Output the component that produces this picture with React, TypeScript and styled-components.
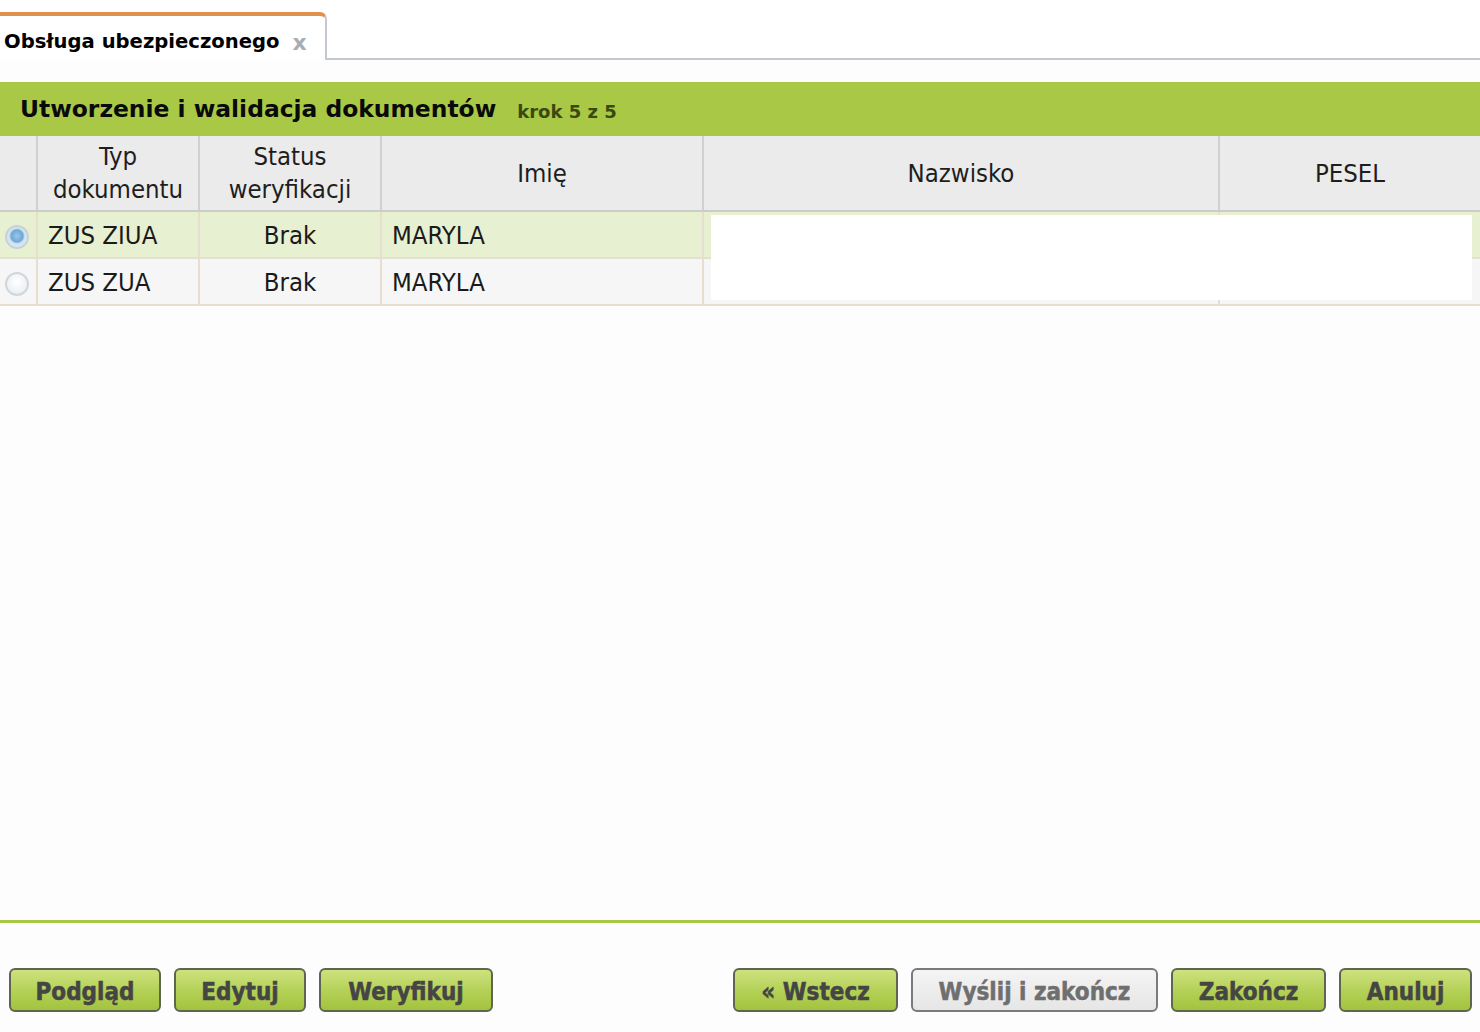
import * as React from 'react';
import styled, { createGlobalStyle } from 'styled-components';

const GlobalStyle = createGlobalStyle`
    html, body {
        margin: 0;
        padding: 0;
        background: #fdfdfd;
    }
    #root {
        height: 1032px;
    }
`;

const Page = styled.div`
    height: 1032px;
    display: flex;
    flex-direction: column;
    font-family: 'DejaVu Sans Condensed', 'DejaVu Sans', sans-serif;
    color: #1a1a1a;
    background: #fdfdfd;
`;

const TabBar = styled.div`
    display: flex;
    padding-top: 12px;
    background: #fff;
`;

const Tab = styled.div`
    width: 327px;
    height: 48px;
    box-sizing: border-box;
    border-top: 4px solid #e0914d;
    border-right: 2px solid #c4c8d0;
    border-top-right-radius: 7px;
    background: #fff;
    display: flex;
    align-items: center;
    padding: 6px 0 0 4px;
    gap: 13px;
`;

const TabTitle = styled.span`
    font-family: 'DejaVu Sans', sans-serif;
    font-weight: bold;
    font-size: 19.6px;
    color: #000;
`;

const TabClose = styled.span`
    font-family: 'DejaVu Sans', sans-serif;
    font-weight: bold;
    font-size: 22px;
    color: #a9aeb4;
    margin-top: 2px;
`;

const TabRest = styled.div`
    flex: 1;
    border-bottom: 2px solid #c4c8d0;
`;

const Spacer = styled.div`
    height: 22px;
    background: #fdfdfd;
`;

const PanelHeader = styled.div`
    height: 54px;
    background: #a8c846;
    display: flex;
    align-items: center;
    padding-left: 20px;
    gap: 21px;
`;

const PanelTitle = styled.span`
    font-family: 'DejaVu Sans', sans-serif;
    font-weight: bold;
    font-size: 23.4px;
    color: #0a0a0a;
`;

const Step = styled.span`
    font-family: 'DejaVu Sans', sans-serif;
    font-weight: bold;
    font-size: 18px;
    color: #3a4812;
    margin-top: 4px;
`;

const TableWrap = styled.div`
    position: relative;
`;

const Grid = styled.table`
    width: 100%;
    border-collapse: collapse;
    table-layout: fixed;
    font-size: 25.5px;
`;

const HeadCell = styled.th`
    height: 74px;
    background: #ebebeb;
    border-left: 2px solid #d0d0d0;
    border-bottom: 2px solid #cccccc;
    font-weight: normal;
    line-height: 33px;
    color: #1e1e1e;
    text-align: center;
    padding: 0 4px;
    &:first-child {
        border-left: none;
    }
`;

const Row = styled.tr<{ $selected?: boolean }>`
    background: ${p => (p.$selected ? '#e7f0d1' : '#f6f6f6')};
    border-bottom: 2px solid #e6dfcd;
`;

const Cell = styled.td<{ $align?: string }>`
    height: 45px;
    padding: 0 10px;
    border-left: 2px solid #e6dfcd;
    text-align: ${p => p.$align || 'left'};
    white-space: nowrap;
    overflow: hidden;
    &:first-child {
        border-left: none;
        padding: 0;
        text-align: left;
    }
`;

const Radio = styled.span<{ $checked?: boolean }>`
    display: inline-block;
    width: 24px;
    height: 24px;
    border-radius: 50%;
    box-sizing: border-box;
    vertical-align: middle;
    margin-left: 5px;
    border: 2px solid ${p => (p.$checked ? '#c6d2da' : '#d2d6da')};
    background: ${p =>
        p.$checked
            ? 'radial-gradient(circle at 50% 45%, #9cc8e8 0, #6ea8d6 40%, #cfe2ef 52%, #eef4f8 100%)'
            : 'radial-gradient(circle at 50% 40%, #ffffff 0, #eef3f6 60%, #dce4e8 100%)'};
`;

const Mask = styled.div`
    position: absolute;
    left: 711px;
    top: 79px;
    width: 761px;
    height: 85px;
    background: #ffffff;
`;

const Filler = styled.div`
    flex: 1;
    background: #fdfdfd;
`;

const Divider = styled.div`
    height: 3px;
    background: #a8c846;
`;

const Footer = styled.div`
    height: 109px;
    display: flex;
    justify-content: space-between;
    align-items: flex-start;
    padding: 45px 8px 0 9px;
    box-sizing: border-box;
    background: #fdfdfd;
`;

const ButtonGroup = styled.div`
    display: flex;
    gap: 13px;
`;

const Button = styled.button<{ $w: number; $disabled?: boolean }>`
    width: ${p => p.$w}px;
    height: 44px;
    border: 2px solid ${p => (p.$disabled ? '#7a7a7a' : '#5f6650')};
    border-radius: 6px;
    background: ${p =>
        p.$disabled
            ? 'linear-gradient(#f4f4f4, #e6e6e6)'
            : 'linear-gradient(#cde27e, #b3d055 55%, #a2c33f)'};
    font-family: 'DejaVu Sans Condensed', 'DejaVu Sans', sans-serif;
    font-weight: bold;
    font-size: 24px;
    color: ${p => (p.$disabled ? '#6f6f6f' : '#454544')};
    -webkit-text-stroke: 0.5px currentColor;
    padding: 4px 0 0;
    cursor: pointer;
`;

const columns = [37, 162, 182, 322, 516, 261];

const rows = [
    { type: 'ZUS ZIUA', status: 'Brak', name: 'MARYLA', selected: true },
    { type: 'ZUS ZUA', status: 'Brak', name: 'MARYLA', selected: false }
];

export default function App() {
    return (
        <Page>
            <GlobalStyle />
            <TabBar>
                <Tab>
                    <TabTitle>Obsługa ubezpieczonego</TabTitle>
                    <TabClose>x</TabClose>
                </Tab>
                <TabRest />
            </TabBar>
            <Spacer />
            <PanelHeader>
                <PanelTitle>Utworzenie i walidacja dokumentów</PanelTitle>
                <Step>krok 5 z 5</Step>
            </PanelHeader>
            <TableWrap>
                <Grid>
                    <colgroup>
                        {columns.map((w, i) => (
                            <col key={i} style={{ width: w }} />
                        ))}
                    </colgroup>
                    <thead>
                        <tr>
                            <HeadCell />
                            <HeadCell>Typ dokumentu</HeadCell>
                            <HeadCell>Status weryfikacji</HeadCell>
                            <HeadCell>Imię</HeadCell>
                            <HeadCell>Nazwisko</HeadCell>
                            <HeadCell>PESEL</HeadCell>
                        </tr>
                    </thead>
                    <tbody>
                        {rows.map((r, i) => (
                            <Row key={i} $selected={r.selected}>
                                <Cell>
                                    <Radio $checked={r.selected} />
                                </Cell>
                                <Cell>{r.type}</Cell>
                                <Cell $align="center">{r.status}</Cell>
                                <Cell>{r.name}</Cell>
                                <Cell />
                                <Cell />
                            </Row>
                        ))}
                    </tbody>
                </Grid>
                <Mask />
            </TableWrap>
            <Filler />
            <Divider />
            <Footer>
                <ButtonGroup>
                    <Button $w={152}>Podgląd</Button>
                    <Button $w={132}>Edytuj</Button>
                    <Button $w={174}>Weryfikuj</Button>
                </ButtonGroup>
                <ButtonGroup>
                    <Button $w={165}>« Wstecz</Button>
                    <Button $w={247} $disabled>
                        Wyślij i zakończ
                    </Button>
                    <Button $w={155}>Zakończ</Button>
                    <Button $w={133}>Anuluj</Button>
                </ButtonGroup>
            </Footer>
        </Page>
    );
}
